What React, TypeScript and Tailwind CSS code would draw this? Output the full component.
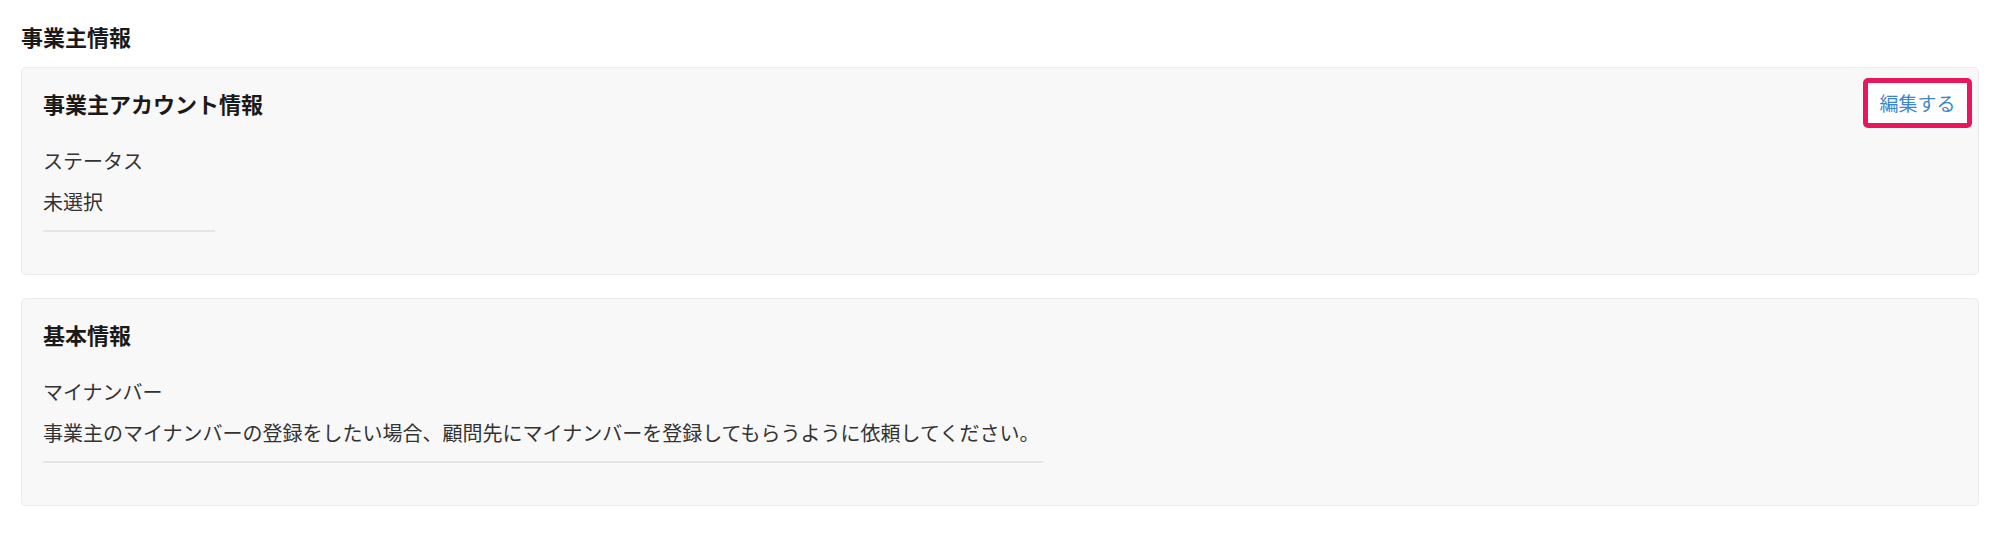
import React from "react";

const font = {
  fontFamily: '"Noto Sans CJK JP", "Noto Sans", sans-serif',
};

function Field({ label, value }: { label: string; value: string }) {
  return (
    <div className="mt-[27px]">
      <div className="text-[20px] leading-[20px] text-[#333333]">{label}</div>
      <div className="mt-[21px] inline-block min-w-[172px] pr-[4px] pb-[18px] border-b-2 border-[#e6e6e6] text-[20px] leading-[20px] text-[#333333]">
        {value}
      </div>
    </div>
  );
}

function Card({
  title,
  action,
  children,
}: {
  title: string;
  action?: React.ReactNode;
  children: React.ReactNode;
}) {
  return (
    <section className="rounded-[5px] border border-[#ececec] bg-[#f8f8f8] px-[21px] pt-[10px] pb-[42px]">
      <div className="flex items-start justify-between h-[46px]">
        <h3 className="pt-[14px] text-[22px] leading-[22px] font-bold text-[#1a1a1a]">{title}</h3>
        {action}
      </div>
      {children}
    </section>
  );
}

export default function App() {
  return (
    <div style={font} className="min-h-[538px] bg-white px-[21px] pr-[20px] pt-[25px]">
      <h2 className="text-[22px] leading-[22px] font-bold text-[#1a1a1a]">事業主情報</h2>

      <div className="mt-[20px] flex flex-col gap-[23px]">
        <Card
          title="事業主アカウント情報"
          action={
            <button className="-mr-[15px] flex h-[50px] w-[109px] items-center justify-center rounded-[5px] border-[5px] border-[#e8175d] bg-white text-[19px] leading-[20px] text-[#3f86c6]">
              編集する
            </button>
          }
        >
          <Field label="ステータス" value="未選択" />
        </Card>

        <Card title="基本情報">
          <Field
            label="マイナンバー"
            value="事業主のマイナンバーの登録をしたい場合、顧問先にマイナンバーを登録してもらうように依頼してください。"
          />
        </Card>
      </div>
    </div>
  );
}
